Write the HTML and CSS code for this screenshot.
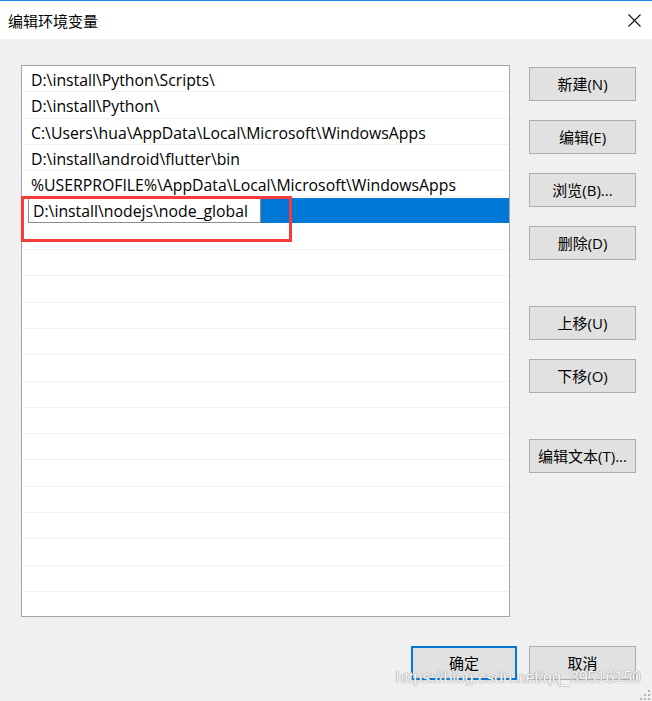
FILE: index.html
```html
<!DOCTYPE html>
<html lang="zh-CN">
<head>
<meta charset="utf-8">
<title>编辑环境变量</title>
<link rel="stylesheet" href="styles.css">
</head>
<body>
<div class="window">
  <div class="titlebar">
    <span class="title">编辑环境变量</span>
    <svg class="close" width="13" height="13" viewBox="0 0 13 13" aria-hidden="true">
      <path d="M0.5 0.5 L12.5 12.5 M12.5 0.5 L0.5 12.5" stroke="#111" stroke-width="1.1" fill="none"/>
    </svg>
  </div>
  <div class="content">
    <div class="list">
      <div class="rows">
        <div class="row">D:\install\Python\Scripts\</div>
        <div class="row">D:\install\Python\</div>
        <div class="row">C:\Users\hua\AppData\Local\Microsoft\WindowsApps</div>
        <div class="row">D:\install\android\flutter\bin</div>
        <div class="row">%USERPROFILE%\AppData\Local\Microsoft\WindowsApps</div>
        <div class="row editing"><span class="edit">D:\install\nodejs\node_global</span><span class="fill"></span></div>
        <div class="row"></div>
        <div class="row"></div>
        <div class="row"></div>
        <div class="row"></div>
        <div class="row"></div>
        <div class="row"></div>
        <div class="row"></div>
        <div class="row"></div>
        <div class="row"></div>
        <div class="row"></div>
        <div class="row"></div>
        <div class="row"></div>
        <div class="row"></div>
        <div class="row"></div>
        <div class="row"></div>
      </div>
      <div class="annot"></div>
    </div>
    <div class="side">
      <div class="group">
        <div class="btn">新建(N)</div>
        <div class="btn">编辑(E)</div>
        <div class="btn">浏览(B)...</div>
        <div class="btn">删除(D)</div>
      </div>
      <div class="group">
        <div class="btn">上移(U)</div>
        <div class="btn">下移(O)</div>
      </div>
      <div class="group">
        <div class="btn">编辑文本(T)...</div>
      </div>
    </div>
  </div>
  <div class="footer">
    <div class="btn default">确定</div>
    <div class="btn">取消</div>
  </div>
  <div class="watermark">https://blog.csdn.net/qq_39516150</div>
  <svg class="grip" width="10" height="10" viewBox="0 0 10 10" aria-hidden="true">
    <rect x="8" y="0" width="2" height="2" fill="#b4b4b4"/>
    <rect x="4" y="4" width="2" height="2" fill="#b4b4b4"/>
    <rect x="8" y="4" width="2" height="2" fill="#b4b4b4"/>
    <rect x="0" y="8" width="2" height="2" fill="#b4b4b4"/>
    <rect x="4" y="8" width="2" height="2" fill="#b4b4b4"/>
    <rect x="8" y="8" width="2" height="2" fill="#b4b4b4"/>
  </svg>
</div>
</body>
</html>
```

FILE: styles.css
```css
html, body {
  margin: 0;
  padding: 0;
}
body {
  background: #f0f0f0;
  font-family: "Open Sans", "Noto Sans CJK SC", sans-serif;
  font-size: 15.8px;
  color: #000;
}
.window {
  position: relative;
  width: 652px;
  height: 701px;
  overflow: hidden;
  background: #f0f0f0;
}
.titlebar {
  box-sizing: border-box;
  height: 39px;
  border-top: 1px solid #1e86d6;
  background: #fff;
  display: flex;
  align-items: center;
  padding-left: 8px;
  padding-right: 11px;
}
.title {
  font-family: "Noto Sans CJK SC", sans-serif;
  font-size: 15px;
  color: #000;
}
.close {
  margin-left: auto;
}
.content {
  display: flex;
  padding: 26px 0 0 21px;
  gap: 19px;
}
.list {
  position: relative;
  box-sizing: border-box;
  width: 489px;
  height: 552px;
  border: 1px solid #a3a3a8;
  background: #fff;
}
.rows {
  height: 100%;
  overflow: hidden;
}
.row {
  box-sizing: border-box;
  height: 26.3px;
  border-bottom: 1px solid #f0f0f0;
  padding-left: 9px;
  line-height: 28px;
  white-space: nowrap;
}
.row.editing {
  display: flex;
  align-items: center;
  padding-left: 6px;
  border-bottom-color: #fff;
}
.edit {
  box-sizing: border-box;
  width: 233px;
  height: 25px;
  border: 1px solid #8c8c8c;
  background: #fff;
  padding-left: 4px;
  line-height: 24px;
  margin-top: 1px;
}
.fill {
  flex: 1;
  height: 25px;
  background: #0078d7;
  margin-top: 1px;
}
.annot {
  position: absolute;
  left: -1px;
  top: 130px;
  width: 271px;
  height: 46px;
  box-sizing: border-box;
  border: 3px solid #f83a3a;
}
.side {
  display: flex;
  flex-direction: column;
  gap: 46px;
  margin-top: 2px;
}
.group {
  display: flex;
  flex-direction: column;
  gap: 19px;
}
.btn {
  box-sizing: border-box;
  width: 107px;
  height: 34px;
  border: 1px solid #adadad;
  background: #e1e1e1;
  display: flex;
  align-items: center;
  justify-content: center;
  font-size: 15px;
  padding-bottom: 1px;
  white-space: nowrap;
}
.footer {
  display: flex;
  justify-content: flex-end;
  gap: 12px;
  padding-right: 16px;
  margin-top: 29px;
}
.btn.default {
  border: 2px solid #0078d7;
  width: 106px;
}
.watermark {
  position: absolute;
  right: 11px;
  top: 669px;
  font-family: "Liberation Sans", sans-serif;
  font-size: 16px;
  line-height: 18px;
  color: #fafafa;
  text-shadow: 0 0 1px #8a8a8a, 0 0 1px #8a8a8a;
  white-space: nowrap;
}
.grip {
  position: absolute;
  right: 2px;
  bottom: 1px;
}
```
